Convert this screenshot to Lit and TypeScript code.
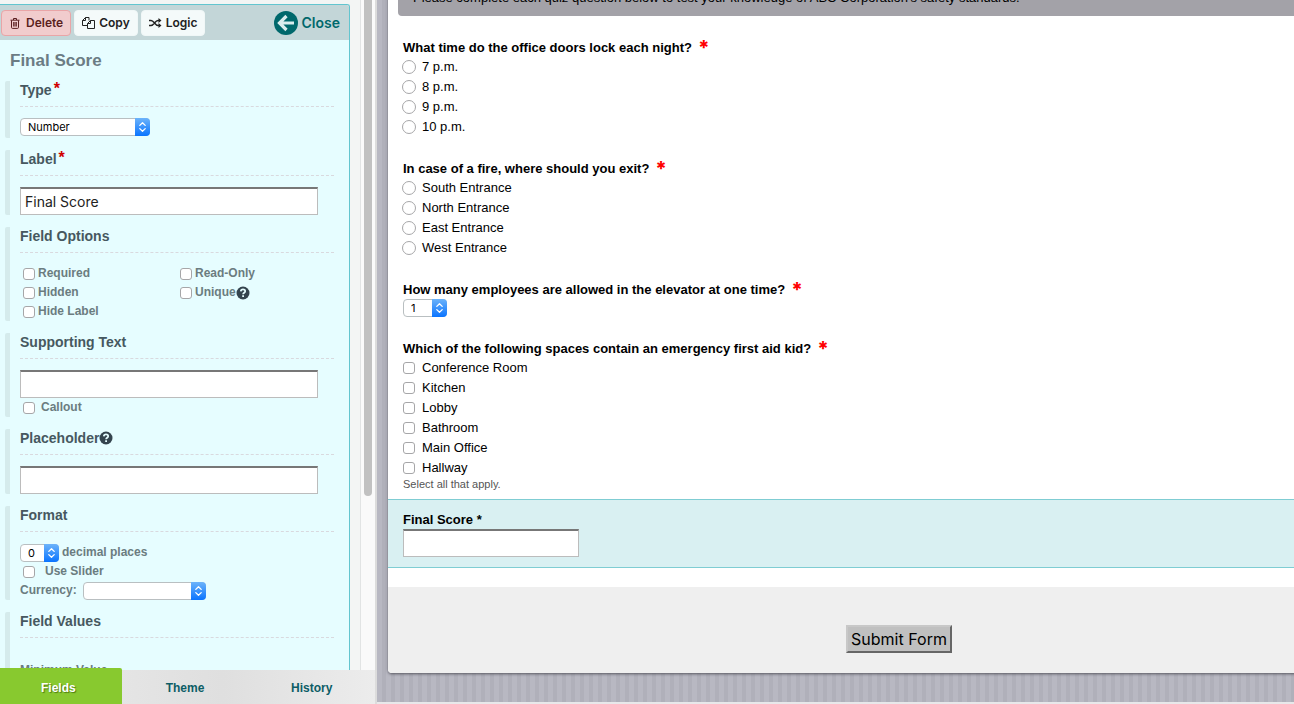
import { LitElement, html, css, svg, nothing } from "lit";
import { customElement, property } from "lit/decorators.js";

const controls = css`
  * { box-sizing: border-box; }
  input, select, button { margin: 0; font: inherit; color: inherit; }
  input[type="checkbox"], input[type="radio"] {
    appearance: none;
    flex: none;
    background: #fff;
    border: 1px solid #a6a6a8;
  }
  input[type="checkbox"] { width: 12px; height: 12px; border-radius: 3px; }
  input[type="radio"] { width: 14px; height: 14px; border-radius: 50%; }
  input:checked { background: #2f86fb; }
  input[type="text"] {
    display: block;
    height: 28px;
    padding: 0 4px;
    background: #fff;
    border: 1px solid #bcbcbc;
    border-top: 2px solid #777;
    border-radius: 0;
    font-family: Inter, sans-serif;
    font-size: 14px;
    font-weight: normal;
    color: #222;
  }
`;

@customElement("popup-select")
export class PopupSelect extends LitElement {
  static styles = css`
    :host { display: inline-block; position: relative; height: 18px; font: 11px/16px Inter, sans-serif; color: #000; }
    select {
      appearance: none;
      box-sizing: border-box;
      display: block;
      width: 100%;
      height: 18px;
      margin: 0;
      padding: 0 16px 0 7px;
      border: 1px solid #b9bfc1;
      border-radius: 4px;
      background: #fff;
      font: inherit;
      color: inherit;
    }
    .cap {
      position: absolute;
      inset: 0 0 0 auto;
      width: 15px;
      height: 18px;
      border-radius: 0 4px 4px 0;
      background: linear-gradient(#6cb3fa, #0a74ff);
      pointer-events: none;
    }
  `;
  @property() value = "";
  @property() name = "";
  render() {
    return html`
      <select aria-label=${this.name}><option>${this.value}</option></select>
      <svg class="cap" viewBox="0 0 15 18" fill="none" stroke="#fff" stroke-width="1.3" stroke-linecap="round" stroke-linejoin="round">
        <path d="M4.8 7.4 7.5 4.8l2.7 2.6M4.8 10.6l2.7 2.6 2.7-2.6" />
      </svg>`;
  }
}

const trash = svg`<path d="M1.500 3.200h9M4.500 3V1.500h3V3M2.500 3.400v7a1 1 0 0 0 1 1h5a1 1 0 0 0 1-1v-7M4.700 5v4.500M6 5v4.500M7.300 5v4.500" />`;
const copy = svg`<path d="M5.5 8.5h-5v-5l3-3h3.5v3M3.5.5v3h-3M5.5 6.5l3-3H12.5v8h-7zM8.5 3.5v3h-3" />`;
const shuffle = svg`<path d="M0 3.500h2c3 0 4 5 7 5h2M0 8.500h2c3 0 4-5 7-5h2" stroke-width="1.500" /><path d="M9.500 1l3 2.500-3 2.500zM9.500 6l3 2.500-3 2.500z" fill="currentColor" stroke="none" />`;

const help = html`<svg class="help" viewBox="0 0 14 14" role="img" aria-label="Help">
  <circle cx="7" cy="7" r="6.500" fill="currentColor" />
  <path d="M4.800 5.400C4.900 4 5.800 3.400 7 3.400s2.200.7 2.200 1.800c0 1.500-2.100 1.500-2.100 3" fill="none" stroke="#e6fdff" stroke-width="1.700" />
  <path d="M6.200 9.200h1.800v1.700H6.200z" fill="#e6fdff" />
</svg>`;

@customElement("field-panel")
export class FieldPanel extends LitElement {
  static styles = [controls, css`
    :host {
      display: block;
      overflow: hidden;
      background: #e6fdff;
      border: 1px solid #63c5cf;
      border-width: 1px 1px 0 0;
      border-top-right-radius: 3px;
      color: #6b7c80;
      font: bold 12px/19px "Liberation Sans", Arial, sans-serif;
    }
    header {
      display: flex;
      align-items: center;
      gap: 3px;
      height: 35px;
      padding: 0 9px 0 1px;
      background: #c3d6d8;
      font-family: Inter, sans-serif;
      font-weight: 600;
      color: #222;
    }
    header button {
      display: flex;
      align-items: center;
      gap: 4px;
      height: 26px;
      padding: 0 7px;
      border: 1px solid #f0f7f7;
      border-radius: 4px;
      background: #f4fafa;
    }
    header .delete { background: #f1cccd; border-color: #e9a5a7; color: #5a1f20; }
    header button svg { width: 13px; height: 12px; fill: none; stroke: currentColor; stroke-width: 1; }
    header .close {
      display: flex;
      align-items: center;
      gap: 4px;
      margin-left: auto;
      font-size: 14px;
      color: #00686c;
      text-decoration: none;
    }
    .close svg { width: 24px; height: 24px; }
    h2 { margin: 0; padding: 9px 10px; font-size: 17px; line-height: 23px; color: #6b7c84; }
    section { margin: 0 15px 12px 5px; padding-left: 10px; border-left: 5px solid #d5ebec; border-radius: 2px; }
    h3 {
      margin: 0 0 11px;
      border-bottom: 1px dashed #d9d9de;
      font-size: 14px;
      line-height: 18px;
      padding-bottom: 7px;
      color: #465860;
      display: flex;
      align-items: center;
    }
    .star { align-self: flex-start; color: #d00000; font-size: 16px; line-height: 16px; height: 16px; margin-left: 2px; }
    section input[type="text"] { width: 298px; max-width: 100%; }
    .row { display: flex; align-items: center; height: 19px; }
    .row label { display: flex; align-items: center; gap: 3px; }
    .row.spaced label { gap: 6px; }
    .row.wide label { gap: 10px; }
    .tick { padding-left: 3px; }
    .pair { display: grid; grid-template-columns: 157px 1fr; }
    .type { width: 130px; }
    .places { width: 39px; margin-right: 3px; }
    .currency { width: 123px; margin-left: 6px; }
    .row.choice { height: 20px; align-items: flex-start; }
    .help { width: 14px; height: 14px; color: #34444e; }
    .min { display: block; padding-top: 12px; }
  `];

  private check(text: string) {
    return html`<label><input type="checkbox" />${text}</label>`;
  }
  private title(text: string, extra: unknown = nothing) {
    return html`<h3>${text}${extra}</h3>`;
  }

  render() {
    const star = html`<span class="star">*</span>`;
    return html`
      <header>
        <button class="delete"><svg viewBox="0 0 13 12">${trash}</svg>Delete</button>
        <button><svg viewBox="0 0 13 12">${copy}</svg>Copy</button>
        <button><svg viewBox="0 0 13 12">${shuffle}</svg>Logic</button>
        <a class="close" href="#">
          <svg viewBox="0 0 24 24"><circle cx="12" cy="12" r="12" fill="#00686c" /><path d="M20 12H6M12.500 5 5.500 12l7 7" fill="none" stroke="#d9eced" stroke-width="3.200" /></svg>Close
        </a>
      </header>
      <h2>Final Score</h2>
      <section>
        ${this.title("Type", star)}
        <div class="row choice"><popup-select class="type" name="Type" value="Number"></popup-select></div>
      </section>
      <section>
        ${this.title("Label", star)}
        <input type="text" aria-label="Label" value="Final Score" />
      </section>
      <section>
        ${this.title("Field Options")}
        <div class="row tick pair">${this.check("Required")}${this.check("Read-Only")}</div>
        <div class="row tick pair">${this.check("Hidden")}<div class="row">${this.check("Unique")}${help}</div></div>
        <div class="row tick">${this.check("Hide Label")}</div>
      </section>
      <section>
        ${this.title("Supporting Text")}
        <input type="text" aria-label="Supporting Text" />
        <div class="row tick spaced">${this.check("Callout")}</div>
      </section>
      <section>
        ${this.title("Placeholder", help)}
        <input type="text" aria-label="Placeholder" />
      </section>
      <section>
        ${this.title("Format")}
        <div class="row"><popup-select class="places" name="decimal places" value="0"></popup-select>decimal places</div>
        <div class="row tick wide">${this.check("Use Slider")}</div>
        <div class="row">Currency:<popup-select class="currency" name="Currency"></popup-select></div>
      </section>
      <section>
        ${this.title("Field Values")}
        <label class="min">Minimum Value<input type="text" /></label>
      </section>`;
  }
}

interface Question { title: string; kind: "radio" | "checkbox" | "select"; options: string[]; hint?: string }

const questions: Question[] = [
  { title: "What time do the office doors lock each night?", kind: "radio", options: ["7 p.m.", "8 p.m.", "9 p.m.", "10 p.m."] },
  { title: "In case of a fire, where should you exit?", kind: "radio", options: ["South Entrance", "North Entrance", "East Entrance", "West Entrance"] },
  { title: "How many employees are allowed in the elevator at one time?", kind: "select", options: ["1"] },
  {
    title: "Which of the following spaces contain an emergency first aid kid?",
    kind: "checkbox",
    options: ["Conference Room", "Kitchen", "Lobby", "Bathroom", "Main Office", "Hallway"],
    hint: "Select all that apply.",
  },
];

@customElement("form-sheet")
export class FormSheet extends LitElement {
  static styles = [controls, css`
    :host {
      display: block;
      min-width: 1022px;
      background: #fff;
      border-radius: 0 0 4px 4px;
      box-shadow: 0 1px 3px #55555f;
      font: 13px/20px "Liberation Sans", Arial, sans-serif;
      color: #000;
    }
    .intro {
      margin: -22px 10px 0;
      padding: 10px 15px 8px;
      border-radius: 4px;
      background: #a3a2a8;
    }
    fieldset { margin: 21px 15px 0; padding: 0; border: 0; min-width: 0; }
    legend { display: flex; gap: 6px; padding: 0; height: 20px; font-weight: bold; line-height: 22px; }
    .star { color: #f00; font: 800 20px/23px Inter, sans-serif; }
    .option { display: flex; align-items: center; height: 20px; width: max-content; }
    .box { display: flex; justify-content: center; width: 12px; margin-right: 7px; }
    .pick { display: block; width: 44px; }
    .hint { font-size: 11px; line-height: 13px; color: #555; margin: 0; }
    .selected {
      margin: 8px 0 19px;
      padding: 10px 15px;
      background: #d9f0f2;
      border: 1px solid #7fcdd3;
      border-width: 1px 0;
    }
    .selected label { display: block; font-weight: bold; line-height: 19px; }
    .selected input { width: 176px; }
    footer {
      display: flex;
      justify-content: center;
      padding: 38px 0 20px;
      background: #efefef;
      border-radius: 0 0 4px 4px;
    }
    footer button {
      height: 28px;
      padding: 0 3px;
      background: #c0c0c0;
      border: 2px solid;
      border-color: #c8c8c8 #666 #666 #c8c8c8;
      font: 16px/24px Inter, sans-serif;
    }
  `];

  private body(q: Question, n: number) {
    if (q.kind === "select") {
      return html`<popup-select class="pick" name=${q.title} value=${q.options[0]}></popup-select>`;
    }
    return q.options.map((o) => html`
      <label class="option"><span class="box"><input type=${q.kind} name="q${n}" /></span>${o}</label>`);
  }

  render() {
    return html`
      <div class="intro">Please complete each quiz question below to test your knowledge of ABC Corporation's safety standards.</div>
      ${questions.map((q, n) => html`
        <fieldset>
          <legend>${q.title}<span class="star">*</span></legend>
          ${this.body(q, n)}
          ${q.hint ? html`<p class="hint">${q.hint}</p>` : nothing}
        </fieldset>`)}
      <div class="selected">
        <label for="score">Final Score *</label>
        <input id="score" type="text" />
      </div>
      <footer><button type="submit">Submit Form</button></footer>`;
  }
}

@customElement("app-root")
export class AppRoot extends LitElement {
  static styles = css`
    :host { display: flex; height: 100vh; overflow: hidden; background: #f3f5f4; }
    * { box-sizing: border-box; }
    aside { display: flex; flex-direction: column; flex: none; width: 377px; border-right: 2px solid #dcdcdc; }
    .scroll { display: flex; flex: 1; min-height: 0; }
    field-panel { width: 350px; margin-top: 4px; }
    .track { width: 15px; margin-left: auto; padding-left: 3px; border-left: 1px solid #e2e4e4; background: #fafafa; }
    .thumb { width: 8px; height: 74%; border-radius: 0 0 4px 4px; background: #c1c1c1; }
    nav {
      display: flex;
      height: 34px;
      margin-left: -5px;
      background: linear-gradient(90deg, #ececec, #dfdfdf 60%, #ececec);
      font: bold 12px/36px "Liberation Sans", Arial, sans-serif;
    }
    nav a { flex: 1; text-align: center; color: #0d5d66; text-decoration: none; }
    nav .on {
      margin-top: -2px;
      padding-top: 2px;
      background: #88c92f;
      border-radius: 0 2px 0 0;
      color: #fff;
      text-shadow: 1px 1px 1px #4c7a10;
    }
    main {
      flex: 1;
      min-width: 0;
      overflow: hidden;
      padding-left: 11px;
      border-bottom: 2px solid #e8e8ea;
      background: repeating-linear-gradient(90deg, #b8b8c2 0 5px, #b0b0ba 5px 9px);
    }
  `;
  render() {
    return html`
      <aside>
        <div class="scroll">
          <field-panel></field-panel>
          <div class="track"><div class="thumb"></div></div>
        </div>
        <nav>
          <a class="on" href="#fields">Fields</a>
          <a href="#theme">Theme</a>
          <a href="#history">History</a>
        </nav>
      </aside>
      <main><form-sheet></form-sheet></main>`;
  }
}
